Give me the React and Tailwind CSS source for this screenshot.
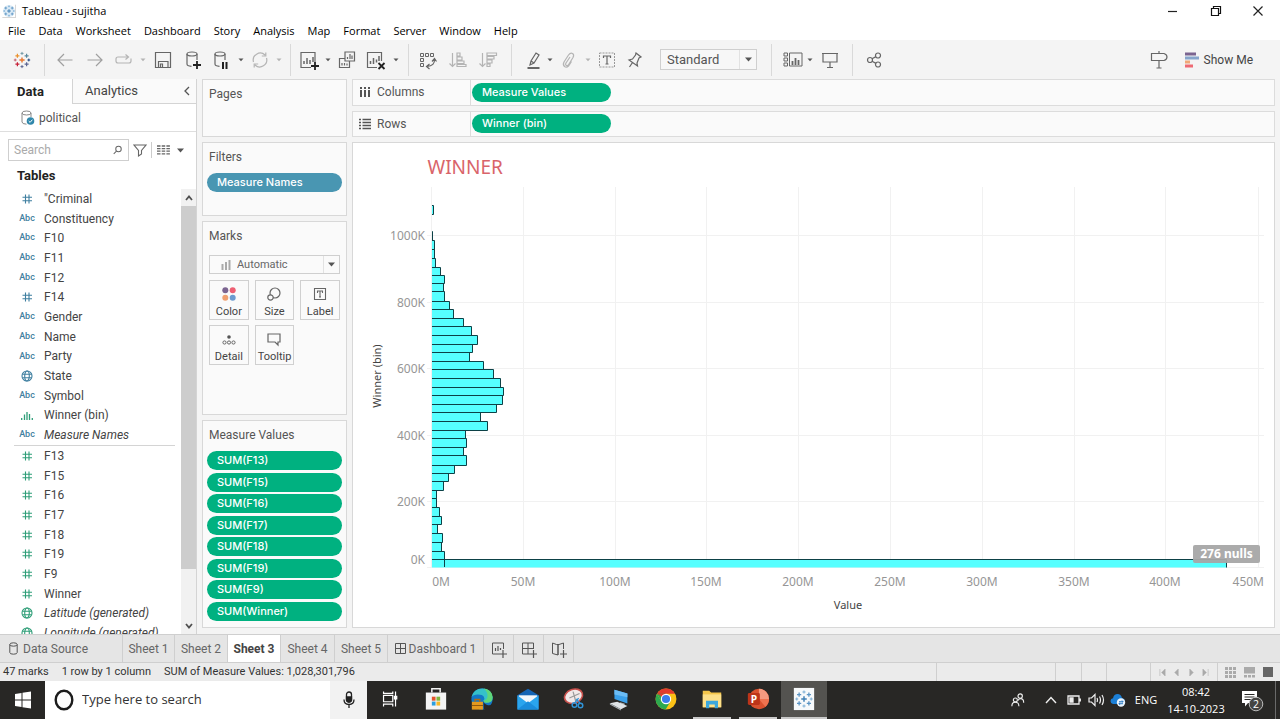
import React from "react";

const SEG = "font-['Open_Sans','Noto_Sans',sans-serif]";

function Ico({ size = 20, children, className = "", color = "#666" }) {
  return (
    <svg
      width={size}
      height={size}
      viewBox="-10 -10 20 20"
      fill="none"
      stroke={color}
      strokeWidth="1.2"
      className={`shrink-0 ${className}`}
      aria-hidden="true"
    >
      {children}
    </svg>
  );
}

const W = { s: "w-[22px]", n: "w-[24px]", m: "w-[28px]", l: "w-[30px]" };

function Tool({ label, w = "l", color, children }) {
  return (
    <button aria-label={label} className={`flex h-full items-center justify-center ${W[w]}`}>
      <Ico color={color}>{children}</Ico>
    </button>
  );
}

function Caret({ light }) {
  return (
    <button aria-label="More options" className="flex h-full w-[10px] items-center justify-center">
      <svg width="6" height="4" viewBox="0 0 6 4" aria-hidden="true">
        <path d="M0.5 0.5h5L3 3.3z" fill={light ? "#b4b4b4" : "#555"} />
      </svg>
    </button>
  );
}

function Sep() {
  return <span className="h-8 w-px bg-[#d9d9d9]" />;
}

function Cross({ x, y, r, c, w = 1 }) {
  return <path d={`M${x - r} ${y}h${2 * r}M${x} ${y - r}v${2 * r}`} stroke={c} strokeWidth={w} />;
}

function TableauMark({ mono }) {
  const c = mono
    ? ["#3f7fb5", "#5b94c4", "#5b94c4", "#5b94c4", "#5b94c4", "#7fb0d6", "#7fb0d6", "#7fb0d6", "#7fb0d6"]
    : ["#e8762d", "#c72037", "#5c6692", "#eb912c", "#59879b", "#7199a6", "#5c6692", "#1f457e", "#c4606c"];
  return (
    <g>
      <Cross x={0} y={0} r={2.6} c={c[0]} w={1.4} />
      <Cross x={-4.6} y={4.2} r={2} c={c[1]} w={1.2} />
      <Cross x={4.6} y={4.2} r={2} c={c[2]} w={1.2} />
      <Cross x={-4.6} y={-4.2} r={2} c={c[3]} w={1.2} />
      <Cross x={4.6} y={-4.2} r={2} c={c[4]} w={1.2} />
      <Cross x={0} y={-6.6} r={1.5} c={c[5]} />
      <Cross x={0} y={6.6} r={1.5} c={c[6]} />
      <Cross x={6.8} y={0} r={1.4} c={c[7]} />
      <Cross x={-6.8} y={0} r={1.4} c={c[8]} />
    </g>
  );
}

function TitleBar() {
  return (
    <header className={`flex h-[22px] shrink-0 items-center bg-white text-[11px] text-black ${SEG}`}>
      <div className="flex flex-1 items-center gap-[6px] pl-[2px]">
        <svg width="14" height="14" viewBox="-10 -10 20 20" aria-hidden="true">
          <circle r="8.5" fill="#dcebf6" />
          <TableauMark mono />
          <path d="M-9.5 9.5h19V-9" fill="none" stroke="#bbb" />
        </svg>
        <h1>Tableau - sujitha</h1>
      </div>
      <button aria-label="Minimize" className="flex w-[43px] justify-center">
        <Ico size={20} color="#222">
          <path d="M-5 0.5h9" />
        </Ico>
      </button>
      <button aria-label="Restore" className="flex w-[43px] justify-center">
        <Ico size={20} color="#111">
          <path d="M-4.5 -2.5h7v7h-7zM-2.5 -2.5v-2h7v7h-2" />
        </Ico>
      </button>
      <button aria-label="Close" className="flex w-[43px] justify-center pr-[2px]">
        <Ico size={20} color="#222">
          <path d="M-4.5 -4.5l9 9M4.5 -4.5l-9 9" />
        </Ico>
      </button>
    </header>
  );
}

const MENUS = ["File", "Data", "Worksheet", "Dashboard", "Story", "Analysis", "Map", "Format", "Server", "Window", "Help"];

function MenuBar() {
  return (
    <nav className={`flex h-[18px] shrink-0 items-center gap-[13px] bg-white px-2 text-[11px] text-black ${SEG}`}>
      {MENUS.map((m) => (
        <button key={m}>{m}</button>
      ))}
    </nav>
  );
}

function Toolbar() {
  const light = "#b4b4b4";
  return (
    <div className="flex h-[39px] shrink-0 items-center bg-[#f4f4f4]">
      <button aria-label="Start page" className="flex w-[44px] justify-center">
        <Ico>
          <TableauMark />
        </Ico>
      </button>
      <Sep />
      <div className="flex h-full items-center pr-[6px] pl-[5px]">
        <Tool label="Undo" color="#a0a0a0">
          <path d="M7.5 0h-14M-1 -6L-7 0l6 6" />
        </Tool>
        <Tool label="Redo" color="#a0a0a0">
          <path d="M-7.5 0h14M1 -6L7 0l-6 6" />
        </Tool>
        <Tool label="Replay" w="m" color={light}>
          <path d="M3.500 -3H-6q-2 0 -2 2v2q0 2 2 2H5q2 0 2-2v-2.500M1.500 -5.500L4.500 -3 1.500 -0.500" />
        </Tool>
        <Caret light />
        <Tool label="Save">
          <path d="M-7.500 -7.500h15v15h-15zM-4.500 7.500v-6h9.500v6M-2.500 7v-3h2v3" />
        </Tool>
        <Tool label="New data source">
          <ellipse cx="-1" cy="-6" rx="5" ry="2" />
          <path d="M-6 -6V4q0 2 4.500 2.300M4 -6V0" />
          <path d="M4 1v8M0 5h8" stroke="#222" strokeWidth="1.800" />
        </Tool>
        <Tool label="Pause updates" w="m">
          <ellipse cx="-2" cy="-6" rx="5" ry="2" />
          <path d="M-7 -6V4q0 2 4.500 2.300M3 -6V0" />
          <path d="M1 2v7M4.500 2v7" stroke="#222" strokeWidth="2" />
        </Tool>
        <Caret />
        <Tool label="Refresh" w="m" color={light}>
          <path d="M-6.500 2A7 7 0 0 1 5 -5M6.500 -2A7 7 0 0 1 -5 5M5.800 -7.500v3.500h-4M-5.800 7.500v-3.500h4" />
        </Tool>
        <Caret light />
      </div>
      <Sep />
      <div className="flex h-full items-center pr-[7px] pl-[4px]">
        <Tool label="New worksheet" w="m">
          <path d="M2 7.500h-10v-15H6V2" />
          <path d="M-5 4v-3M-2 4v-6M1 4v-4M4 2v-5" strokeWidth="1.500" />
          <path d="M6 2v8M2 6h8" stroke="#222" strokeWidth="1.800" />
        </Tool>
        <Caret />
        <Tool label="Duplicate" w="m">
          <path d="M-2 -8h9.500v9h-9.500zM-2 -1.500h-5.500v9h10V1" />
          <path d="M0.500 -1v-2M3 -1v-5M5 -1v-3.500M-5 5.500V3M-2.500 5.500v-2.500M0 5.500v-2" />
        </Tool>
        <Tool label="Clear sheet" w="l">
          <path d="M1 7.500h-9.500v-15H5.500V1" />
          <path d="M-5.500 4v-3M-2.500 4v-6M0.500 2.500v-3M3 1v-5" strokeWidth="1.500" />
          <path d="M2.500 3l6 6M8.500 3l-6 6" stroke="#222" strokeWidth="1.800" />
        </Tool>
        <Caret />
      </div>
      <Sep />
      <div className="flex h-full items-center pr-[8px] pl-[4px]">
        <Tool label="Swap rows and columns">
          <path d="M-7.500 -6.500h3v3h-3zM-2.500 -6.500h3v3h-3zM2.500 -6.500h3v3h-3zM-7.500 -1.500h3v3h-3zM-7.500 3.500h3v3h-3z" strokeWidth="1" />
          <path d="M6.500 -1Q7 6 -1 6.500M4 1.500L6.500 -1.500 8.500 1.500M1.500 4L-1.500 6.500 1.500 9" />
        </Tool>
        <Tool label="Sort ascending" color={light}>
          <path d="M-5.500 -7v13M-8.500 3.500l3 3 3-3M-1 -7h3v3h-3zM-1 -3h5v3h-5zM-1 1h7v2.500h-7zM-1 4.500h9v2h-9z" />
        </Tool>
        <Tool label="Sort descending" color={light}>
          <path d="M-5.500 -7v13M-8.500 3.500l3 3 3-3M-1 -7h9.500v2.500h-9.500zM-1 -3.500h7v2.500h-7zM-1 0h5v3h-5zM-1 4h3v2.500h-3z" />
        </Tool>
      </div>
      <Sep />
      <div className="flex h-full items-center pr-[11px] pl-[11px]">
        <Tool label="Highlight" w="s">
          <path d="M-4 5l1 -4 5 -8 3 2 -5 8zM-3 1l3 2" />
          <path d="M-6.500 8h12" strokeWidth="2" />
        </Tool>
        <Caret />
        <Tool label="Group members" w="m" color={light}>
          <path d="M1 -3L-3 3q-1 2 .5 2.500t2.500-1.500l4-6.500q1.500-3-.5-4t-4 1.500l-4.500 7q-1.500 3 .5 4.500t4-.5l3-4.500" />
        </Tool>
        <Caret light />
        <Tool label="Show mark labels" w="m">
          <rect x="-7.500" y="-7" width="15" height="14" strokeDasharray="2 1" strokeWidth="1" stroke="#999" />
          <path d="M-3.500 -2v-2h7v2M0 -4v8M-1.500 4h3" />
        </Tool>
        <Tool label="Pin" w="m">
          <path d="M1 -7l5 4 -2 1 -2 5 .5 3 -8.500 -6 3.500 -1 3 -4zM-2.500 2.500L-5.500 7" />
        </Tool>
      </div>
      <label className="relative flex items-center">
        <span className="sr-only">Fit</span>
        <select className="h-[21px] w-[97px] appearance-none border border-[#cfcfcf] bg-[#f7f7f7] py-0 pl-[6px] text-[13px] leading-[19px] text-[#555]">
          <option>Standard</option>
        </select>
        <span className="pointer-events-none absolute inset-y-[1px] right-[1px] flex w-[17px] items-center justify-center border-l border-[#e2e2e2]">
          <svg width="7" height="5" viewBox="0 0 7 5" aria-hidden="true">
            <path d="M0 0.500h7L3.500 4.500z" fill="#555" />
          </svg>
        </span>
      </label>
      <div className="flex h-full items-center pl-[14px]">
        <Sep />
      </div>
      <div className="flex h-full items-center pr-[7px] pl-[9px]">
        <Tool label="Show cards" w="n">
          <path d="M-9 -7h3.500v3h-3.500zM-9 -2h3.500v3h-3.500zM-9 3h3.500v3h-3.500zM-3.500 -7H9v13H-3.500z" strokeWidth="1" />
          <path d="M-.5 5V1M2.500 5v-7M5.500 5V0" strokeWidth="1.800" />
        </Tool>
        <Caret />
        <Tool label="Presentation mode" w="l">
          <path d="M-8 -6.500h16M-7 -6.500v8.500h14v-8.500M0 2v5M-3 7.500h6" />
        </Tool>
      </div>
      <Sep />
      <div className="flex h-full items-center pl-[6px]">
        <Tool label="Share">
          <circle cx="-4" cy="0" r="2.500" />
          <circle cx="4" cy="-4.500" r="2.500" />
          <circle cx="4" cy="4.500" r="2.500" />
          <path d="M-2 -1.200l4 -2.200M-2 1.200l4 2.200" />
        </Tool>
      </div>
      <div className="ml-auto flex h-full items-center gap-[11px] pr-[27px]">
        <Tool label="Data guide">
          <path d="M-7.500 -6.500h12.500q3 1 3 3.500t-3 3.500h-12.500zM0 -9v2.500M0 .5v7.500M-2.500 8h5" />
        </Tool>
        <button className="flex items-center gap-[5px] text-[12px] text-[#444]">
          <svg width="14" height="16" viewBox="0 0 14 16" aria-hidden="true">
            <path d="M0 2h11" stroke="#7b6490" strokeWidth="3" />
            <path d="M0 6h14" stroke="#86a5cc" strokeWidth="3" />
            <path d="M0 10h5" stroke="#f0a878" strokeWidth="3" />
            <path d="M0 14h8" stroke="#ee6a74" strokeWidth="3" />
          </svg>
          Show Me
        </button>
      </div>
    </div>
  );
}

const BLUE = "#3f7fa0";
const GREEN = "#2f9e78";

function FieldIcon({ kind, color }) {
  if (kind === "abc")
    return <span className="text-[9px] font-medium text-[#3f7fa0]">Abc</span>;
  return (
    <svg width="12" height="12" viewBox="0 0 12 12" fill="none" stroke={color} strokeWidth="1.1" aria-hidden="true">
      {kind === "num" && <path d="M4.500 1.500v9M8 1.500v9M1.500 4.200h9.500M1.500 7.700h9.500" />}
      {kind === "geo" && (
        <>
          <circle cx="6" cy="6" r="5" />
          <ellipse cx="6" cy="6" rx="2.300" ry="5" />
          <path d="M1.500 4.200h9M1.500 7.800h9" />
        </>
      )}
      {kind === "bin" && <path d="M.7 9v2M3.500 5.500v5.500M6 3v8M8.500 5v6M11.300 9v2" strokeWidth="1.300" />}
    </svg>
  );
}

const DIMENSIONS = [
  ["num", '"Criminal'],
  ["abc", "Constituency"],
  ["abc", "F10"],
  ["abc", "F11"],
  ["abc", "F12"],
  ["num", "F14"],
  ["abc", "Gender"],
  ["abc", "Name"],
  ["abc", "Party"],
  ["geo", "State"],
  ["abc", "Symbol"],
  ["bin", "Winner (bin)"],
  ["abc", "Measure Names", true],
];
const MEASURES = [
  ["num", "F13"],
  ["num", "F15"],
  ["num", "F16"],
  ["num", "F17"],
  ["num", "F18"],
  ["num", "F19"],
  ["num", "F9"],
  ["num", "Winner"],
  ["geo", "Latitude (generated)", true],
  ["geo", "Longitude (generated)", true],
];

function FieldList({ fields, measure, className }) {
  return (
    <ul className={`grid shrink-0 auto-rows-fr ${className}`}>
      {fields.map(([kind, name, italic]) => (
        <li key={name} className="flex items-center text-[12px] text-[#444]">
          <span className="flex w-[26px] justify-center">
            <FieldIcon kind={kind} color={measure || kind === "bin" ? GREEN : BLUE} />
          </span>
          <span className={`pl-[4px] whitespace-nowrap ${italic ? "italic" : ""}`}>{name}</span>
        </li>
      ))}
    </ul>
  );
}

function DataPane() {
  return (
    <aside className="flex w-[197px] shrink-0 flex-col border-r border-[#d4d4d4] bg-white">
      <div className="flex h-[25px] shrink-0 text-[13px]">
        <button className="w-[72px] pr-[11px] font-bold text-[#222]">Data</button>
        <button className="flex flex-1 items-center justify-between border-b border-l border-[#d4d4d4] bg-[#fafafa] pr-[5px] pl-[12px] text-[#444]">
          Analytics
          <svg width="8" height="10" viewBox="0 0 8 10" fill="none" stroke="#555" strokeWidth="1.300" aria-hidden="true">
            <path d="M6 1L2 5l4 4" />
          </svg>
        </button>
      </div>
      <div className="flex h-[28px] shrink-0 items-center gap-[4px] border-b border-[#dedede] pl-[21px] text-[12px] text-[#555]">
        <svg width="14" height="16" viewBox="0 0 14 16" fill="none" stroke="#888" aria-hidden="true">
          <ellipse cx="5.500" cy="3" rx="4.500" ry="2" />
          <path d="M1 3v9q0 2 4.500 2.200M10 3v4" />
          <circle cx="9.500" cy="11" r="3.800" fill="#2f87ab" stroke="none" />
          <path d="M7.700 11l1.400 1.400 2.300-2.700" stroke="#fff" />
        </svg>
        political
      </div>
      <div className="flex shrink-0 items-center pt-[7px] pl-2">
        <label className="flex h-[22px] w-[121px] items-center border border-[#cfcfcf] pr-[6px]">
          <input placeholder="Search" aria-label="Search" className="w-full min-w-0 bg-transparent pl-[5px] text-[12px] outline-none placeholder:text-[#aaa]" />
          <svg width="10" height="10" viewBox="0 0 10 10" fill="none" stroke="#666" strokeWidth="1.100" aria-hidden="true">
            <circle cx="6" cy="4" r="3" />
            <path d="M3.800 6.200L.8 9.200" />
          </svg>
        </label>
        <button aria-label="Filter fields" className="flex w-[22px] justify-center">
          <svg width="14" height="13" viewBox="0 0 14 13" fill="none" stroke="#666" strokeWidth="1.100" aria-hidden="true">
            <path d="M1 1h12L8.500 6.500V10L5.500 12V6.500z" />
          </svg>
        </button>
        <span className="h-4 w-px bg-[#ccc]" />
        <button aria-label="Change view" className="flex w-[22px] justify-center">
          <svg width="13" height="10" viewBox="0 0 13 10" stroke="#666" strokeWidth="1.300" aria-hidden="true">
            <path d="M0 1h13M0 3.600h13M0 6.200h13M0 8.800h13" strokeDasharray="3.500 1.200" />
          </svg>
        </button>
        <button aria-label="View options" className="flex w-[13px] justify-center">
          <svg width="7" height="5" viewBox="0 0 7 5" aria-hidden="true">
            <path d="M0 .5h7L3.500 4.500z" fill="#555" />
          </svg>
        </button>
      </div>
      <h2 className="flex h-[28px] shrink-0 items-center pt-[2px] pl-[17px] text-[13px] font-bold text-[#222]">Tables</h2>
      <div className="flex min-h-0 flex-1">
        <div className="flex flex-1 flex-col overflow-hidden pl-[14px]">
          <FieldList fields={DIMENSIONS} className="h-[256px]" />
          <hr className="mr-[6px] shrink-0 border-[#d4d4d4]" />
          <FieldList fields={MEASURES} measure className="h-[197px]" />
        </div>
        <div className="flex w-[15px] flex-col bg-[#f1f1f1]">
          <button aria-label="Scroll up" className="flex h-[17px] items-center justify-center">
            <svg width="8" height="6" viewBox="0 0 8 6" fill="none" stroke="#505050" strokeWidth="1.800" aria-hidden="true">
              <path d="M1 5l3-3.500L7 5" />
            </svg>
          </button>
          <div className="flex-[365] bg-[#cdcdcd]" />
          <div className="flex-[48]" />
          <button aria-label="Scroll down" className="flex h-[17px] items-center justify-center">
            <svg width="8" height="6" viewBox="0 0 8 6" fill="none" stroke="#505050" strokeWidth="1.800" aria-hidden="true">
              <path d="M1 1l3 3.500L7 1" />
            </svg>
          </button>
        </div>
      </div>
    </aside>
  );
}

function Card({ title, className, children }) {
  return (
    <section className={`border border-[#d8d8d8] bg-[#fafafa] ${className}`}>
      <h2 className="flex h-[28px] items-center pl-[6px] text-[12px] text-[#555]">{title}</h2>
      {children}
    </section>
  );
}

function Pill({ blue, className = "", children }) {
  return (
    <button
      className={`flex items-center rounded-full pl-[10px] font-['Inter','Roboto',sans-serif] text-[11px] leading-[19px] font-medium text-white ${blue ? "bg-[#4996b2]" : "bg-[#00b180]"} ${className}`}
    >
      {children}
    </button>
  );
}

function MarkButton({ label, children }) {
  return (
    <button className="flex h-[40px] flex-col items-center justify-between border border-[#d0d0d0] bg-[#fafafa] pt-[3px] text-[11px] leading-[14px] text-[#444]">
      <Ico>{children}</Ico>
      {label}
    </button>
  );
}

const SUMS = ["F13", "F15", "F16", "F17", "F18", "F19", "F9", "Winner"];

function Cards() {
  return (
    <div className="flex w-[145px] shrink-0 flex-col gap-[5px]">
      <Card title="Pages" className="h-[58px]" />
      <Card title="Filters" className="h-[74px]">
        <div className="px-1 pt-[2px]">
          <Pill blue className="h-[19px] w-full">Measure Names</Pill>
        </div>
      </Card>
      <Card title="Marks" className="h-[194px]">
        <div className="px-[6px] pt-[5px]">
          <label className="relative flex items-center">
            <span className="sr-only">Mark type</span>
            <select className="h-[19px] w-full appearance-none border border-[#cfcfcf] bg-[#fafafa] py-0 pl-[27px] text-[11px] leading-[17px] text-[#666]">
              <option>Automatic</option>
            </select>
            <svg className="pointer-events-none absolute left-[12px]" width="10" height="10" viewBox="0 0 10 10" stroke="#aaa" strokeWidth="2" aria-hidden="true">
              <path d="M1.500 10V4M5 10V2M8.500 10V0" />
            </svg>
            <span className="pointer-events-none absolute inset-y-[1px] right-[1px] flex w-[16px] items-center justify-center border-l border-[#e2e2e2]">
              <svg width="7" height="5" viewBox="0 0 7 5" aria-hidden="true">
                <path d="M0 .5h7L3.500 4.500z" fill="#555" />
              </svg>
            </span>
          </label>
          <div className="mt-[6px] grid grid-cols-3 gap-x-[6px] gap-y-[5px]">
            <MarkButton label="Color">
              <g stroke="none">
                <circle cx="-3.700" cy="-3.700" r="3" fill="#7b6490" />
                <circle cx="3.700" cy="-3.700" r="3" fill="#ee5f72" />
                <circle cx="-3.700" cy="3.700" r="3" fill="#f0a070" />
                <circle cx="3.700" cy="3.700" r="3" fill="#6c9bd0" />
              </g>
            </MarkButton>
            <MarkButton label="Size">
              <circle cx="1" cy="-1" r="5" />
              <circle cx="-3.500" cy="3.500" r="2.700" fill="#fafafa" />
            </MarkButton>
            <MarkButton label="Label">
              <path d="M-5.500 -5.500h11v11h-11zM-2.500 -1v-2h5v2M0 -3v6M-1 3h2" strokeWidth="1.100" />
            </MarkButton>
            <MarkButton label="Detail">
              <circle cx="0" cy="-2" r="1.800" fill="#555" stroke="none" />
              <g strokeWidth="1">
                <circle cx="-4.500" cy="3.500" r="1.600" />
                <circle cx="0" cy="3.500" r="1.600" />
                <circle cx="4.500" cy="3.500" r="1.600" />
              </g>
            </MarkButton>
            <MarkButton label="Tooltip">
              <path d="M-6 -5h12v8h-2v3l-3-3h-7z" />
            </MarkButton>
          </div>
        </div>
      </Card>
      <Card title="Measure Values" className="flex-1">
        <div className="flex h-[172px] flex-col justify-between px-1 pt-[2px]">
          {SUMS.map((s) => (
            <Pill key={s} className="h-[19px] w-full">{`SUM(${s})`}</Pill>
          ))}
        </div>
      </Card>
    </div>
  );
}

function Shelf({ title, pill, icon }) {
  return (
    <div className="flex flex-1 border border-[#dcdcdc] bg-[#fafafa]">
      <div className="flex w-[118px] items-center gap-[6px] border-r border-[#dcdcdc] pl-[6px] text-[12px] text-[#555]">
        {icon}
        {title}
      </div>
      <div className="flex items-center pl-[1px]">
        <Pill className="h-[19px] w-[139px]">{pill}</Pill>
      </div>
    </div>
  );
}

// Top edge and right edge of every bar; the lower edge is the next bar's top.
const BARS = [
  [231, 433], [240, 435], [249, 435], [258, 436], [267, 441], [275, 445], [283, 444], [291, 445],
  [301, 450], [309, 454], [318, 464], [326, 472], [335, 478], [344, 473], [352, 470], [361, 484],
  [369, 494], [378, 501], [387, 504], [395, 503], [404, 497], [412, 481], [421, 488], [430, 466],
  [438, 467], [447, 464], [455, 467], [465, 455], [473, 449], [481, 444], [490, 437], [498, 437],
  [507, 440], [516, 442], [524, 438], [533, 443], [542, 442], [551, 445], [559, 1227],
];
const Y_TICKS = [
  ["1000K", 235], ["800K", 302], ["600K", 368], ["400K", 435], ["200K", 501],
];
const X_TICKS = [
  ["50M", 523], ["100M", 615], ["150M", 706], ["200M", 798], ["250M", 890], ["300M", 982], ["350M", 1074], ["400M", 1165],
];

function Chart() {
  return (
    <svg viewBox="353 143 921 484" className="h-full w-full font-['Noto_Sans','Open_Sans',sans-serif]" role="img" aria-label="Winner histogram">
      <text x="427.500" y="173.500" fontSize="19" fill="#d9646a">WINNER</text>
      <g stroke="#f1f1f1">
        {Y_TICKS.map(([t, y]) => (
          <path key={t} d={`M427 ${y + 0.5}H1264`} />
        ))}
        <path d="M427 567.500H1264M431.500 187V567" />
        {X_TICKS.map(([t, x]) => (
          <path key={t} d={`M${x + 0.5} 187V567`} />
        ))}
        <path d="M1258.500 187V567" />
      </g>
      <g fill="#56ffff">
        {BARS.map(([y, x], i) => {
          const next = i + 1 < BARS.length ? BARS[i + 1][0] : 567;
          return <path key={y} d={`M432 ${y + 0.5}H${x - 0.5}V${next + 0.5}H432z`} />;
        })}
      </g>
      <g fill="none" stroke="#0d4146">
        <path d="M432 205.500H433.500V214.500H432" fill="#56ffff" />
        {BARS.map(([y, x], i) => {
          const last = i + 1 === BARS.length;
          const next = last ? 567 : BARS[i + 1][0];
          return <path key={y} d={`M432 ${y + 0.5}H${x - 0.5}V${next + 0.5}${last ? "" : "H432"}`} />;
        })}
        <path d="M444.500 559V567" />
      </g>
      <g fontSize="12" fill="#969696" textAnchor="end">
        {Y_TICKS.map(([t, y]) => (
          <text key={t} x="425" y={y + 5}>{t}</text>
        ))}
        <text x="425" y="564">0K</text>
        <text x="450" y="586">0M</text>
        <text x="1264" y="586">450M</text>
      </g>
      <g fontSize="12" fill="#969696" textAnchor="middle">
        {X_TICKS.map(([t, x]) => (
          <text key={t} x={x} y="586">{t}</text>
        ))}
      </g>
      <g fontSize="11" fill="#444" textAnchor="middle">
        <text x="848" y="609">Value</text>
        <text transform="translate(381 376) rotate(-90)">Winner (bin)</text>
      </g>
      <rect x="1193" y="545" width="67" height="18" rx="2" fill="#a6a6a6" fillOpacity="0.950" />
      <text x="1226.500" y="558" fontSize="12" fontWeight="700" fill="#fff" textAnchor="middle">276 nulls</text>
    </svg>
  );
}

function Viz() {
  return (
    <main className="flex min-w-0 flex-1 flex-col gap-[5px]">
      <div className="flex h-[58px] shrink-0 flex-col gap-[5px]">
        <Shelf
          title="Columns"
          pill="Measure Values"
          icon={
            <svg width="12" height="12" viewBox="0 0 12 12" stroke="#555" strokeWidth="2" aria-hidden="true">
              <path d="M2 4v7M6 4v7M10 4v7M2 1v2M6 1v2M10 1v2" />
            </svg>
          }
        />
        <Shelf
          title="Rows"
          pill="Winner (bin)"
          icon={
            <svg width="12" height="12" viewBox="0 0 12 12" stroke="#555" strokeWidth="1.500" aria-hidden="true">
              <path d="M0 1.500h2M0 4.500h2M0 7.500h2M0 10.500h2M3.500 1.500H12M3.500 4.500H12M3.500 7.500H12M3.500 10.500H12" />
            </svg>
          }
        />
      </div>
      <div className="min-h-0 flex-1 border border-[#d8d8d8] bg-white">
        <Chart />
      </div>
    </main>
  );
}

function SheetTab({ className, active, children }) {
  return (
    <button
      className={`flex items-center justify-center gap-[3px] border-r border-[#cfcfcf] whitespace-nowrap ${active ? "bg-white font-bold text-[#444]" : "text-[#666]"} ${className}`}
    >
      {children}
    </button>
  );
}

function SheetTabs() {
  return (
    <nav className="flex h-[28px] shrink-0 border-t border-[#cfcfcf] bg-[#e5e5e5] text-[12px]">
      <button className="flex w-[123px] items-center gap-[5px] border-r border-[#cfcfcf] pl-[9px] text-[#666]">
        <svg width="9" height="13" viewBox="0 0 9 13" fill="none" stroke="#555" aria-hidden="true">
          <ellipse cx="4.500" cy="2.500" rx="3.700" ry="1.700" />
          <path d="M.8 2.500v8q0 1.700 3.700 1.700t3.700-1.700v-8" />
        </svg>
        Data Source
      </button>
      <SheetTab className="w-[52px]">Sheet 1</SheetTab>
      <SheetTab className="w-[53px]">Sheet 2</SheetTab>
      <SheetTab className="w-[53px]" active>Sheet 3</SheetTab>
      <SheetTab className="w-[54px]">Sheet 4</SheetTab>
      <SheetTab className="w-[53px]">Sheet 5</SheetTab>
      <SheetTab className="w-[96px]">
        <svg width="11" height="11" viewBox="0 0 11 11" fill="none" stroke="#555" aria-hidden="true">
          <path d="M.5 .5h10v10H.5zM5.500 .5v10M.5 5.500h10" />
        </svg>
        Dashboard 1
      </SheetTab>
      <button aria-label="New worksheet" className="flex w-[30px] items-center justify-center border-r border-[#cfcfcf]">
        <Ico color="#555">
          <path d="M1 5h-7.500v-11h11V0" strokeWidth="1" />
          <path d="M-3.500 2v-3M-1 2v-5M1.500 1v-2M4 1v8M1 5h7" />
        </Ico>
      </button>
      <button aria-label="New dashboard" className="flex w-[30px] items-center justify-center border-r border-[#cfcfcf]">
        <Ico color="#555">
          <path d="M1 5h-7.500v-11h11V0M-1 -6V5M-6.500 -.5h11" strokeWidth="1" />
          <path d="M4.500 1v8M1 5h7" />
        </Ico>
      </button>
      <button aria-label="New story" className="flex w-[30px] items-center justify-center border-r border-[#cfcfcf]">
        <Ico color="#555">
          <path d="M-6.500 -6l4 1.500L0 -4.500 4.500 -6v6M-6.500 -6V4.500L-1 6V-4.500M-1 -4.500V6" strokeWidth="1" />
          <path d="M4.500 1v8M1 5h7" />
        </Ico>
      </button>
    </nav>
  );
}

function StatusBar() {
  return (
    <footer className="flex h-[19px] shrink-0 items-center border-t border-[#cfcfcf] bg-[#ebebeb] text-[11px] text-[#333]">
      <p className="flex flex-1 gap-[13px] pl-[3px] whitespace-nowrap">
        <span>47 marks</span>
        <span>1 row by 1 column</span>
        <span>SUM of Measure Values: 1,028,301,796</span>
      </p>
      <span className="h-full w-[119px] border-l border-[#cfcfcf]" />
      <span className="h-full w-[26px] border-l border-[#cfcfcf]" />
      <span className="h-full w-[25px] border-l border-[#cfcfcf]" />
      <span className="h-full w-[44px] border-l border-[#cfcfcf]" />
      <div className="flex h-full w-[67px] items-center justify-around border-l border-[#cfcfcf] px-1">
        {["M1 0v8M7 0v8L3 4z", "M6 0v8L2 4z", "M2 0v8l4-4z", "M1 0v8l4-4zM7 0v8"].map((d, i) => (
          <button key={d} aria-label={["First sheet", "Previous sheet", "Next sheet", "Last sheet"][i]}>
            <svg width="7" height="7" viewBox="0 0 8 8" fill="#aaa" stroke="#aaa" strokeWidth="1" aria-hidden="true">
              <path d={d} strokeWidth=".6" />
            </svg>
          </button>
        ))}
      </div>
      <div className="flex h-full w-[63px] items-center justify-around border-l border-[#cfcfcf] px-[3px]">
        <button aria-label="Sheet sorter">
          <svg width="11" height="11" viewBox="0 0 11 11" stroke="#aaa" strokeWidth="3" aria-hidden="true">
            <path d="M0 1.500h11M0 5.500h11M0 9.500h11" strokeDasharray="3 1" />
          </svg>
        </button>
        <button aria-label="Filmstrip">
          <svg width="11" height="11" viewBox="0 0 11 11" fill="#aaa" stroke="#aaa" aria-hidden="true">
            <path d="M0 0h11v6.500H0z" stroke="none" />
            <path d="M0 9.200h11" strokeWidth="2.500" strokeDasharray="3 1" />
          </svg>
        </button>
        <button aria-label="Show tabs" className="size-[10px] bg-[#666]" />
      </div>
    </footer>
  );
}

function TaskIcon({ label, open, active, children }) {
  return (
    <button
      aria-label={label}
      className={`flex h-full w-[46px] items-center justify-center ${active ? "bg-[#545350]" : ""}`}
    >
      <span className={`flex h-full items-center justify-center border-b-2 ${active ? "w-full" : "w-[38px]"} ${open ? "border-[#c9c9c9]" : "border-transparent"}`}>
        <svg width="24" height="24" viewBox="0 0 26 26" fill="none" aria-hidden="true">
          {children}
        </svg>
      </span>
    </button>
  );
}

function Taskbar() {
  return (
    <footer className={`flex h-[38px] shrink-0 items-center bg-[#282725] text-white ${SEG}`}>
      <button aria-label="Start" className="flex w-[45px] justify-center">
        <svg width="16" height="18" viewBox="0 0 16 18" fill="#fff" aria-hidden="true">
          <path d="M0 3l6.500-1v6.500H0zM7.500 1.800L16 .5v8H7.500zM0 9.500h6.500V16L0 15zM7.500 9.500H16v8l-8.500-1.300z" />
        </svg>
      </button>
      <label className="flex h-full w-[285px] items-center bg-white pl-[9px]">
        <svg width="20" height="22" viewBox="0 0 20 22" fill="none" aria-hidden="true">
          <ellipse cx="10" cy="11" rx="8.300" ry="9.300" stroke="#1c1c1c" strokeWidth="2.400" />
        </svg>
        <input placeholder="Type here to search" aria-label="Type here to search" className="min-w-0 flex-1 bg-transparent pl-[8px] text-[13px] outline-none placeholder:text-[#333]" />
      </label>
      <button aria-label="Voice search" className="flex h-full w-[37px] items-center justify-center bg-[#f2f2f2]">
        <svg width="12" height="18" viewBox="0 0 12 18" fill="none" stroke="#222" strokeWidth="1.300" aria-hidden="true">
          <rect x="3.500" y="1" width="5" height="10" rx="2.500" />
          <path d="M3.500 6h5v3.500q-2.500 3-5 0z" fill="#222" />
          <path d="M1 8.500q0 5 5 5t5-5M6 13.500v3.500" />
        </svg>
      </button>
      <TaskIcon label="Task View">
        <g stroke="#fff" strokeWidth="1.300">
          <path d="M6 9h10v7H6zM6 5v2h10V5M6 21v-2.500h10V21M19 5v16" />
          <path d="M17.800 10h2.500v3h-2.500z" fill="#fff" />
        </g>
      </TaskIcon>
      <TaskIcon label="Microsoft Store">
        <path d="M2 6h22v18.500H2z" fill="#f4f4f4" />
        <path d="M8.500 6V2h9v4" stroke="#f4f4f4" strokeWidth="1.600" />
        <path d="M8.500 10.500h4v4.300h-4z" fill="#e2532b" />
        <path d="M13.500 10.500h4v4.300h-4z" fill="#7fb63c" />
        <path d="M8.500 15.800h4v4.300h-4z" fill="#2c9fe0" />
        <path d="M13.500 15.800h4v4.300h-4z" fill="#f6b829" />
      </TaskIcon>
      <TaskIcon label="Microsoft Edge">
        <circle cx="13" cy="13" r="11.500" fill="#1378c8" />
        <path d="M1.500 11Q4 1.500 13.500 1.500T24.500 11q0 6-7 6-3 0-3-2 2-2 .5-4.500T8.500 8Q3.500 8 1.500 11z" fill="#35c1c9" />
        <path d="M15 1.600Q24 3 24.500 11q0 6-7 6-3 0-3-2 4-1 4.500-5T15 1.600z" fill="#5fd67a" />
        <path d="M14.500 15q.5 3.500 4 4.500t5-1q-2 6-8.500 6z" fill="#282725" />
        <path d="M2 16h12v8.500H2z" fill="#e59a1e" />
        <path d="M5.500 16v-2.500h5V16" stroke="#b06c10" strokeWidth="1.500" />
        <path d="M2 19.500h12v1H2z" fill="#8a530b" />
      </TaskIcon>
      <TaskIcon label="Mail">
        <path d="M1.500 9L13 2l11.500 7v15h-23z" fill="#1464b4" />
        <path d="M3 9h20v9H3z" fill="#f2f6fa" />
        <path d="M1.500 9L13 17.500 24.500 9v15.500h-23z" fill="#2aa5ee" />
        <path d="M1.500 24.500L13 15.500l11.500 9z" fill="#1b8ddc" />
      </TaskIcon>
      <TaskIcon label="Snipping Tool">
        <ellipse cx="12.500" cy="10" rx="10" ry="7.500" transform="rotate(-20 12.500 10)" fill="#f1e9e9" stroke="#c8504c" strokeWidth="1.800" />
        <path d="M8 12l11-5M12 5l3 11" stroke="#999" strokeWidth="1.300" />
        <circle cx="13.500" cy="19.500" r="2.500" stroke="#3094d8" strokeWidth="1.600" />
        <circle cx="20" cy="20" r="2.500" stroke="#3094d8" strokeWidth="1.600" />
        <path d="M14 17l4-5M19.500 17.500L15.500 13" stroke="#3094d8" strokeWidth="1.500" />
      </TaskIcon>
      <TaskIcon label="Remote desktop">
        <path d="M7 3l14 4v11L7 13z" fill="#3aa0ea" />
        <path d="M7 3l14 4v4L7 8z" fill="#6bbcf5" />
        <path d="M13 16.500l5 1.500v2l-5-1.500z" fill="#9ba4aa" />
        <path d="M2 17.500l8-1.500 11 4.500-7 3.500z" fill="#dfe3e6" />
        <path d="M2 17.500l12 6.500v1.500L2 19z" fill="#aab1b6" />
      </TaskIcon>
      <TaskIcon label="Google Chrome">
        <circle cx="13" cy="13" r="11.300" fill="#fbc116" />
        <path d="M3.200 7.400A11.300 11.300 0 0 1 22.800 7.400H13A5.600 5.600 0 0 0 8 10.300L13 13z" fill="#e33b2e" />
        <path d="M3.200 7.400A11.300 11.300 0 0 0 12.600 24.300L17.800 15.800 13 13 8.100 15.900z" fill="#2da94f" />
        <path d="M3.200 7.400h10v4L8.100 15.900z" fill="#2da94f" />
        <path d="M3.200 7.400H13v2L8.500 11.500 6.500 9z" fill="#e33b2e" />
        <circle cx="13" cy="13" r="5.600" fill="#fff" />
        <circle cx="13" cy="13" r="4.400" fill="#3b7ded" />
      </TaskIcon>
      <TaskIcon label="File Explorer" open>
        <path d="M3 4h7l2 2h11v16H3z" fill="#f5c64b" />
        <path d="M3 8h20v14H3z" fill="#fde08a" />
        <path d="M6.500 15h13v8h-3.500v-4h-6v4H6.500z" fill="#3ba7dd" />
      </TaskIcon>
      <TaskIcon label="PowerPoint" open>
        <circle cx="14" cy="13" r="11" fill="#d9512f" />
        <path d="M14 2a11 11 0 0 1 11 11H14z" fill="#f49a80" />
        <path d="M14 13h11a11 11 0 0 1-4 8.500z" fill="#ee7350" />
        <rect x="2" y="6.500" width="13" height="13" rx="1.500" fill="#bd3419" />
        <text x="8.500" y="17" fontSize="11" fontWeight="700" fill="#fff" textAnchor="middle">P</text>
      </TaskIcon>
      <TaskIcon label="Tableau" open active>
        <path d="M2 1h22v24H2z" fill="#f7f9fb" />
        <g transform="translate(13 13) scale(1.15)">
          <TableauMark mono />
        </g>
      </TaskIcon>
      <div className="ml-auto flex h-full items-center text-[11px]">
        <button aria-label="People" className="flex w-[42px] justify-center">
          <svg width="14" height="16" viewBox="0 0 16 18" fill="none" stroke="#eee" strokeWidth="1.300" aria-hidden="true">
            <circle cx="5" cy="9" r="2.300" />
            <path d="M1 16q0-4.500 4-4.500t4 4.500" />
            <circle cx="10.500" cy="4.500" r="2.500" />
            <path d="M8 9.500q1-2 3-2 3.500 0 3.500 4.500" />
          </svg>
        </button>
        <button aria-label="Show hidden icons" className="flex w-[24px] justify-center">
          <svg width="12" height="8" viewBox="0 0 12 8" fill="none" stroke="#eee" strokeWidth="1.400" aria-hidden="true">
            <path d="M1 7l5-5.500L11 7" />
          </svg>
        </button>
        <button aria-label="Battery" className="flex w-[22px] justify-center">
          <svg width="14" height="10" viewBox="0 0 14 10" fill="none" stroke="#eee" strokeWidth="1.300" aria-hidden="true">
            <path d="M1 1h11v8H1zM13.300 3.500v3" />
            <path d="M3 3h3v4H3z" fill="#eee" />
          </svg>
        </button>
        <button aria-label="Volume" className="flex w-[22px] justify-center">
          <svg width="17" height="14" viewBox="0 0 17 14" fill="none" stroke="#eee" strokeWidth="1.200" aria-hidden="true">
            <path d="M1 5h2.500L7 1.500v11L3.500 9H1zM9 5q1 2 0 4M11.500 3.500q2 3.500 0 7M14 2q3 5 0 10" />
          </svg>
        </button>
        <button aria-label="OneDrive" className="flex w-[22px] justify-center">
          <svg width="16" height="14" viewBox="0 0 16 14" aria-hidden="true">
            <path d="M3 11q-2.500-.5-2.500-3T3 5.200Q4 1 7.500 1t4.500 4q3 .5 3 3.500t-3 2.500z" fill="#1b7fd6" />
            <circle cx="11" cy="9.500" r="4.200" fill="#e9f3fc" />
            <path d="M9 8.700h4M9 10.700h4M12 7.500l1 1.200-1 1M10 9.500l-1 1.200 1 1.200" stroke="#1b6fc0" fill="none" strokeWidth=".9" />
          </svg>
        </button>
        <span className="w-[34px] text-center">ENG</span>
        <button className="w-[66px] text-center leading-[17px]">
          <span className="block">08:42</span>
          <span className="block">14-10-2023</span>
        </button>
        <button aria-label="Notifications" className="flex w-[46px] justify-center">
          <svg width="24" height="24" viewBox="0 0 24 24" aria-hidden="true">
            <path d="M2 3h15v12h-9l-3 3.500V15H2z" fill="#fff" />
            <path d="M4.500 6.500h10M4.500 9h10M4.500 11.500h7" stroke="#282725" />
            <circle cx="16" cy="16" r="6.800" fill="#454442" stroke="#bbb" />
            <text x="16" y="19.800" fontSize="10.500" fill="#fff" textAnchor="middle">2</text>
          </svg>
        </button>
        <span className="h-full w-[5px] border-l border-[#6a6a6a]" />
      </div>
    </footer>
  );
}

export default function App() {
  return (
    <div className="flex h-screen min-w-[1100px] flex-col overflow-hidden bg-[#f4f4f4] font-['Roboto','Liberation_Sans',sans-serif]">
      <TitleBar />
      <MenuBar />
      <Toolbar />
      <div className="flex min-h-0 flex-1">
        <DataPane />
        <div className="flex min-w-0 flex-1 gap-[5px] pr-[5px] pb-[6px] pl-[5px]">
          <Cards />
          <Viz />
        </div>
      </div>
      <SheetTabs />
      <StatusBar />
      <Taskbar />
    </div>
  );
}
